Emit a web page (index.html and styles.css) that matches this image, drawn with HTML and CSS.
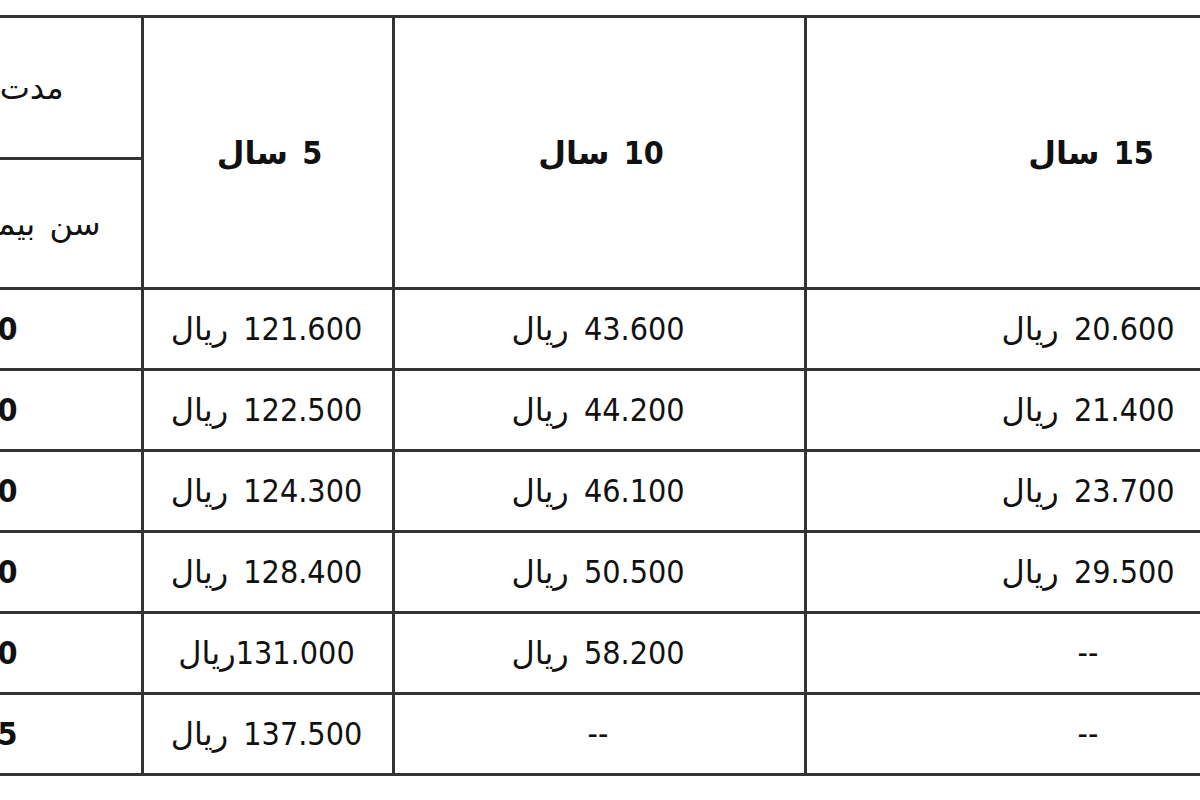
FILE: index.html
```
<!DOCTYPE html>
<html lang="fa">
<head>
<meta charset="utf-8">
<title>جدول حق بیمه</title>
<link rel="stylesheet" href="styles.css">
</head>
<body>
<div class="sheet">
<table class="premiums">
<colgroup>
<col class="col-age">
<col class="col-5">
<col class="col-10">
<col class="col-15">
</colgroup>
<tr class="head-top">
<td class="corner corner-term">مدت بیمه</td>
<td class="term" rowspan="2"><span class="num">5</span> سال</td>
<td class="term" rowspan="2"><span class="num">10</span> سال</td>
<td class="term" rowspan="2"><span class="num">15</span> سال</td>
</tr>
<tr class="head-bottom">
<td class="corner corner-age">سن بیمه شده</td>
</tr>
<tr class="row">
<td class="age"><span class="num">20</span></td>
<td class="price"><span class="num">121.600</span> ریال</td>
<td class="price"><span class="num">43.600</span> ریال</td>
<td class="price"><span class="num">20.600</span> ریال</td>
</tr>
<tr class="row">
<td class="age"><span class="num">30</span></td>
<td class="price"><span class="num">122.500</span> ریال</td>
<td class="price"><span class="num">44.200</span> ریال</td>
<td class="price"><span class="num">21.400</span> ریال</td>
</tr>
<tr class="row">
<td class="age"><span class="num">40</span></td>
<td class="price"><span class="num">124.300</span> ریال</td>
<td class="price"><span class="num">46.100</span> ریال</td>
<td class="price"><span class="num">23.700</span> ریال</td>
</tr>
<tr class="row">
<td class="age"><span class="num">50</span></td>
<td class="price"><span class="num">128.400</span> ریال</td>
<td class="price"><span class="num">50.500</span> ریال</td>
<td class="price"><span class="num">29.500</span> ریال</td>
</tr>
<tr class="row">
<td class="age"><span class="num">60</span></td>
<td class="price"><span class="num">131.000</span>ریال</td>
<td class="price"><span class="num">58.200</span> ریال</td>
<td class="price"><span class="num">--</span></td>
</tr>
<tr class="row">
<td class="age"><span class="num">65</span></td>
<td class="price"><span class="num">137.500</span> ریال</td>
<td class="price"><span class="num">--</span></td>
<td class="price"><span class="num">--</span></td>
</tr>
</table>
</div>
</body>
</html>
```

FILE: styles.css
```
html, body {
  margin: 0;
  padding: 0;
  background: #ffffff;
  overflow: hidden;
}

body {
  font-family: "DejaVu Sans", sans-serif;
  color: #111111;
}

.sheet {
  padding-top: 15px;
  margin-left: -146px;
}

.premiums {
  direction: ltr;
  border-collapse: separate;
  border-spacing: 0;
  table-layout: fixed;
  width: 1521px;
  border-top: 3px solid #333333;
}

.col-age { width: 290px; }
.col-5 { width: 251px; }
.col-10 { width: 412px; }
.col-15 { width: 568px; }

.premiums td {
  box-sizing: border-box;
  padding: 0;
  border-right: 3px solid #333333;
  border-bottom: 3px solid #333333;
  text-align: center;
  vertical-align: middle;
  direction: rtl;
  font-size: 32px;
  line-height: 1;
  white-space: nowrap;
}

.num {
  font-family: "DejaVu Sans Condensed", "DejaVu Sans", sans-serif;
  font-stretch: semi-condensed;
}

.head-top { height: 142px; }
.head-bottom { height: 130px; }
.row { height: 81px; }

.premiums .corner {
  word-spacing: 4px;
}

.premiums .corner-term {
  padding-right: 6px;
}

.premiums .corner-age {
  padding-left: 6px;
}

.premiums .price {
  word-spacing: 5px;
  padding-right: 9px;
}

.premiums .term {
  font-weight: bold;
  word-spacing: 3px;
  padding-right: 3px;
}

.premiums .age {
  font-weight: bold;
  padding-right: 6px;
}
```
